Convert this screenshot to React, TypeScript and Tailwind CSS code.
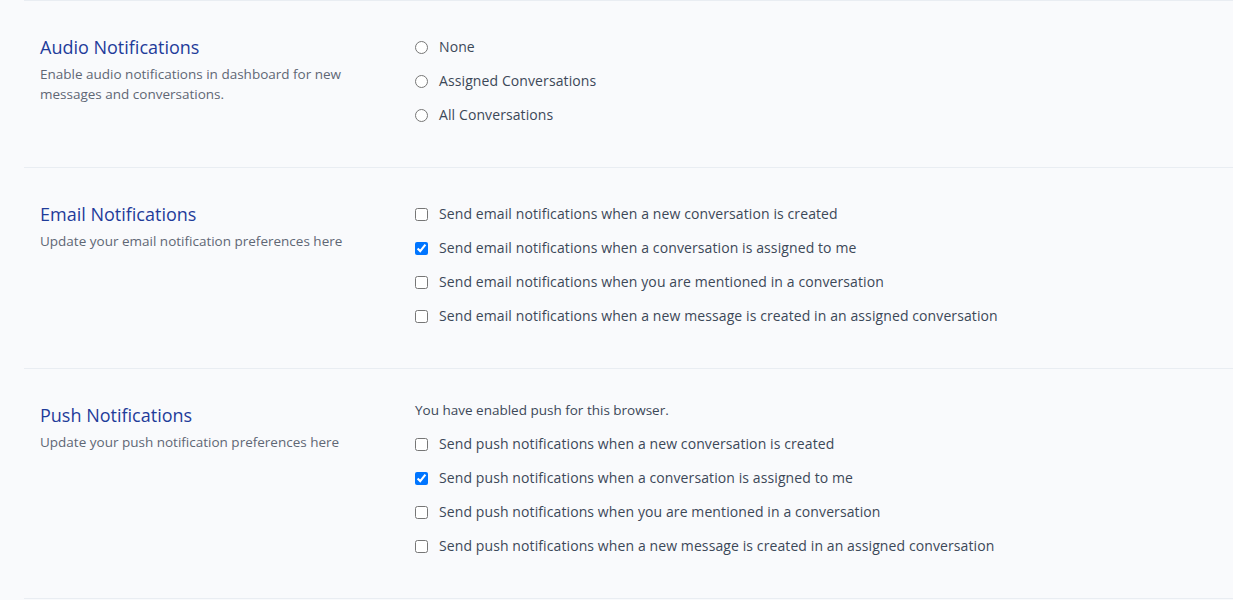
import { useState } from 'react';

type Item = { id: string; label: string; checked?: boolean };

const emailItems: Item[] = [
  { id: 'email_conversation_creation', label: 'Send email notifications when a new conversation is created' },
  { id: 'email_conversation_assignment', label: 'Send email notifications when a conversation is assigned to me', checked: true },
  { id: 'email_conversation_mention', label: 'Send email notifications when you are mentioned in a conversation' },
  { id: 'email_assigned_new_message', label: 'Send email notifications when a new message is created in an assigned conversation' },
];

const pushItems: Item[] = [
  { id: 'push_conversation_creation', label: 'Send push notifications when a new conversation is created' },
  { id: 'push_conversation_assignment', label: 'Send push notifications when a conversation is assigned to me', checked: true },
  { id: 'push_conversation_mention', label: 'Send push notifications when you are mentioned in a conversation' },
  { id: 'push_assigned_new_message', label: 'Send push notifications when a new message is created in an assigned conversation' },
];

const audioOptions = ['None', 'Assigned Conversations', 'All Conversations'];

function Section({ title, note, children }: { title: string; note: string; children: React.ReactNode }) {
  return (
    <section className="flex border-b border-[#e9edf2] pt-[29px] pb-[35px]">
      <div className="w-[391px] shrink-0 pl-4 pt-[3px]">
        <h2 className="text-[18px] leading-7 text-[#1f3c9a]">{title}</h2>
        <p className="mt-[3px] w-[320px] text-[13.5px] leading-5 text-[#5f6775]">{note}</p>
      </div>
      <div className="flex-1">{children}</div>
    </section>
  );
}

function CheckRow({ item }: { item: Item }) {
  const [checked, setChecked] = useState(!!item.checked);
  return (
    <label className="flex h-[34px] items-center gap-[11px] pb-[2px] text-[14px] tracking-[0.1px] text-[#3c4858]">
      <input
        type="checkbox"
        checked={checked}
        onChange={() => setChecked(!checked)}
        className="m-0 mt-[2px] h-[13px] w-[13px]"
      />
      {item.label}
    </label>
  );
}

export default function App() {
  const [audio, setAudio] = useState('');
  return (
    <div className="min-h-screen bg-[#f9fafc] pl-6" style={{ fontFamily: '"Open Sans", sans-serif' }}>
      <div className="border-t border-[#e9edf2]">
        <Section
          title="Audio Notifications"
          note="Enable audio notifications in dashboard for new messages and conversations."
        >
          {audioOptions.map((opt) => (
            <label
              key={opt}
              className="flex h-[34px] items-center gap-[11px] pb-[2px] text-[14px] tracking-[0.1px] text-[#3c4858]"
            >
              <input
                type="radio"
                name="audio"
                checked={audio === opt}
                onChange={() => setAudio(opt)}
                className="m-0 mt-[2px] h-[13px] w-[13px]"
              />
              {opt}
            </label>
          ))}
        </Section>

        <Section title="Email Notifications" note="Update your email notification preferences here">
          {emailItems.map((item) => (
            <CheckRow key={item.id} item={item} />
          ))}
        </Section>

        <Section title="Push Notifications" note="Update your push notification preferences here">
          <p className="h-[29px] text-[13.5px] leading-[24px] text-[#3c4858]">You have enabled push for this browser.</p>
          {pushItems.map((item) => (
            <CheckRow key={item.id} item={item} />
          ))}
        </Section>
      </div>
    </div>
  );
}
